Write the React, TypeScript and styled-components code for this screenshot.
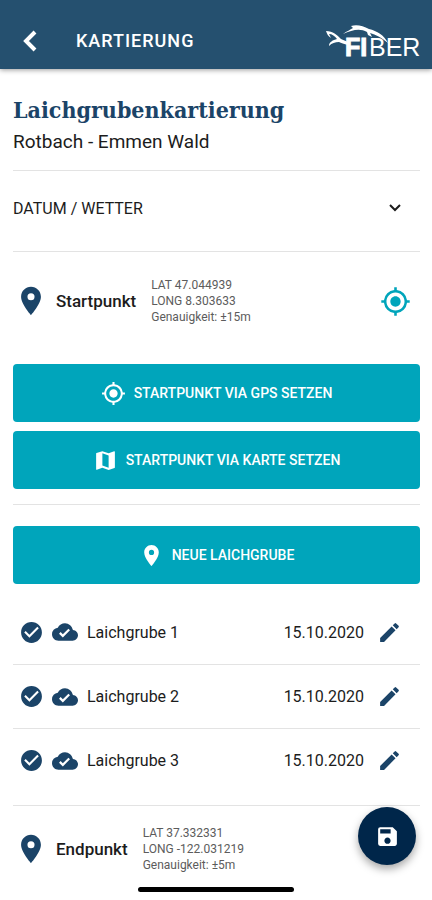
import React from "react";
import styled, { createGlobalStyle } from "styled-components";
import {
  MdCheckCircle,
  MdCloudDone,
  MdEdit,
  MdLocationOn,
  MdMap,
  MdMyLocation,
  MdSave,
} from "react-icons/md";

const color = {
  header: "#25506f",
  navy: "#1b4468",
  teal: "#00a5bb",
  fab: "#00264a",
  line: "#e3e3e3",
  text: "#1c1c1c",
  muted: "#5c5c5c",
};

const GlobalStyle = createGlobalStyle`
  *, *::before, *::after { box-sizing: border-box; }
  body {
    margin: 0;
    background: #fff;
    color: ${color.text};
    font-family: Roboto, "Liberation Sans", sans-serif;
    font-size: 16px;
  }
  button { font: inherit; border: 0; padding: 0; cursor: pointer; }
  svg { display: block; flex: none; }
`;

const AppBar = styled.header`
  display: flex;
  align-items: center;
  height: 69px;
  padding: 12px 10px 0 12px;
  background: ${color.header};
  color: #fff;
  box-shadow: 0 1px 5px rgba(0, 0, 0, 0.4);
`;

const IconButton = styled.button<{ $tone?: string }>`
  display: grid;
  place-items: center;
  width: 36px;
  height: 36px;
  background: transparent;
  color: ${(p) => p.$tone ?? "inherit"};
`;

const BarTitle = styled.div`
  flex: 1;
  margin-left: 28px;
  font-size: 18px;
  font-weight: 500;
  letter-spacing: 1px;
`;

const Page = styled.main`
  padding: 24px 12px 27px 13px;
`;

const Section = styled.section<{ $pad: string }>`
  padding: ${(p) => p.$pad};
  & + & { border-top: 1px solid ${color.line}; }
`;

const Heading = styled.h1`
  margin: 0;
  font-family: "Roboto Slab", "DejaVu Serif Condensed", "DejaVu Serif", serif;
  font-size: 23px;
  font-weight: 700;
  line-height: 34px;
  color: ${color.navy};
`;

const Subtitle = styled.p`
  margin: 0;
  font-size: 19px;
  line-height: 30px;
`;

const Disclosure = styled.button`
  display: flex;
  align-items: center;
  justify-content: space-between;
  width: 100%;
  height: 80px;
  padding: 0 16px 6px 0;
  background: transparent;
  color: inherit;
`;

const PointRow = styled.div`
  display: flex;
  align-items: center;
  padding-right: 7px;
`;

const PinSlot = styled.span`
  display: grid;
  place-items: center;
  width: 43px;
  padding-right: 7px;
  color: ${color.navy};
`;

const PointName = styled.h2`
  margin: 0 15px 0 0;
  font-size: 17px;
  font-weight: 500;
`;

const Coordinates = styled.p`
  flex: 1;
  margin: 0;
  font-size: 12px;
  line-height: 16px;
  color: ${color.muted};
`;

const Actions = styled.div`
  display: flex;
  flex-direction: column;
  gap: 9px;
  margin-top: 39px;
`;

const ActionButton = styled.button`
  display: flex;
  align-items: center;
  justify-content: center;
  gap: 8px;
  width: 100%;
  height: 58px;
  border-radius: 4px;
  background: ${color.teal};
  color: #fff;
  font-size: 14px;
  font-weight: 500;
  text-transform: uppercase;
`;

const List = styled.ul`
  margin: 16px 0 0;
  padding: 0;
  list-style: none;
`;

const Item = styled.li`
  display: flex;
  align-items: center;
  height: 64px;
  padding: 0 13px 0 6px;
  & + & { border-top: 1px solid ${color.line}; }
`;

const Status = styled.span`
  display: flex;
  align-items: center;
  gap: 8px;
  margin-right: 9px;
  color: ${color.navy};
`;

const ItemName = styled.span`
  flex: 1;
`;

const ItemDate = styled.time`
  margin-right: 7px;
`;

const SaveButton = styled.button`
  position: fixed;
  right: 16px;
  bottom: 35px;
  display: grid;
  place-items: center;
  width: 58px;
  height: 58px;
  border-radius: 50%;
  background: ${color.fab};
  color: #fff;
  box-shadow: 0 4px 8px rgba(0, 0, 0, 0.35);
`;

const HomeIndicator = styled.div`
  position: fixed;
  right: 0;
  bottom: 8px;
  left: 0;
  width: 36%;
  height: 5px;
  margin: 0 auto;
  border-radius: 3px;
  background: #000;
`;

const Logo = () => (
  <svg width="96" height="42" viewBox="0 0 96 42" role="img" aria-label="FIBER">
    <g fill="#fff">
      <path d="M0 11C7 11 11 15 15 19C17 20 20 21 22 22V25C18 24 15 23 13 22C9 22 6 23 3 26C3 22 7 20 11 19C9 16 6 14 3 14L5 18C2 16 1 14 0 11Z" />
      <path d="M17 14C21 11 24 10 27 8L25 6C31 4 37 6 43 9C51 11 58 15 62 23C55 17 50 15 44 13L46 17L42 15L41 12C34 8 26 10 17 14Z" />
      <text x="19" y="36" fontFamily="Liberation Sans, sans-serif" fontSize="25" fontWeight="700" stroke="#fff" strokeWidth="1">FI</text>
      <text x="43" y="36" fontFamily="Liberation Sans, sans-serif" fontSize="25">BER</text>
    </g>
  </svg>
);

const entries = ["Laichgrube 1", "Laichgrube 2", "Laichgrube 3"];

type PointProps = {
  name: string;
  lat: string;
  long: string;
  accuracy: string;
  children?: React.ReactNode;
};

const Point = ({ name, lat, long, accuracy, children }: PointProps) => (
  <PointRow>
    <PinSlot><MdLocationOn size={34} /></PinSlot>
    <PointName>{name}</PointName>
    <Coordinates>
      LAT {lat}<br />
      LONG {long}<br />
      Genauigkeit: {accuracy}
    </Coordinates>
    {children}
  </PointRow>
);

export default function App() {
  return (
    <>
      <GlobalStyle />
      <AppBar>
        <IconButton aria-label="Zurück">
          <svg width="24" height="24" viewBox="0 0 24 24" fill="none" stroke="currentColor" strokeWidth="4">
            <path d="M17 3L8 12L17 21" />
          </svg>
        </IconButton>
        <BarTitle>KARTIERUNG</BarTitle>
        <Logo />
      </AppBar>
      <Page>
        <Section $pad="0 0 13px">
          <Heading>Laichgrubenkartierung</Heading>
          <Subtitle>Rotbach - Emmen Wald</Subtitle>
        </Section>
        <Section $pad="0">
          <Disclosure aria-expanded={false}>
            DATUM / WETTER
            <svg width="18" height="18" viewBox="0 0 18 18" fill="none" stroke="currentColor" strokeWidth="2">
              <path d="M4 6L9 11L14 6" />
            </svg>
          </Disclosure>
        </Section>
        <Section $pad="25px 0 15px">
          <Point name="Startpunkt" lat="47.044939" long="8.303633" accuracy="±15m">
            <IconButton $tone={color.teal} aria-label="Position bestimmen">
              <MdMyLocation size={31} />
            </IconButton>
          </Point>
          <Actions>
            <ActionButton><MdMyLocation size={25} />Startpunkt via GPS setzen</ActionButton>
            <ActionButton><MdMap size={25} />Startpunkt via Karte setzen</ActionButton>
          </Actions>
        </Section>
        <Section $pad="21px 0 13px">
          <ActionButton><MdLocationOn size={25} />Neue Laichgrube</ActionButton>
          <List>
            {entries.map((name) => (
              <Item key={name}>
                <Status>
                  <MdCheckCircle size={25} />
                  <MdCloudDone size={26} />
                </Status>
                <ItemName>{name}</ItemName>
                <ItemDate dateTime="2020-10-15">15.10.2020</ItemDate>
                <IconButton $tone={color.navy} aria-label={`${name} bearbeiten`}>
                  <MdEdit size={25} />
                </IconButton>
              </Item>
            ))}
          </List>
        </Section>
        <Section $pad="19px 0 0">
          <Point name="Endpunkt" lat="37.332331" long="-122.031219" accuracy="±5m" />
        </Section>
      </Page>
      <SaveButton aria-label="Speichern"><MdSave size={25} /></SaveButton>
      <HomeIndicator />
    </>
  );
}
